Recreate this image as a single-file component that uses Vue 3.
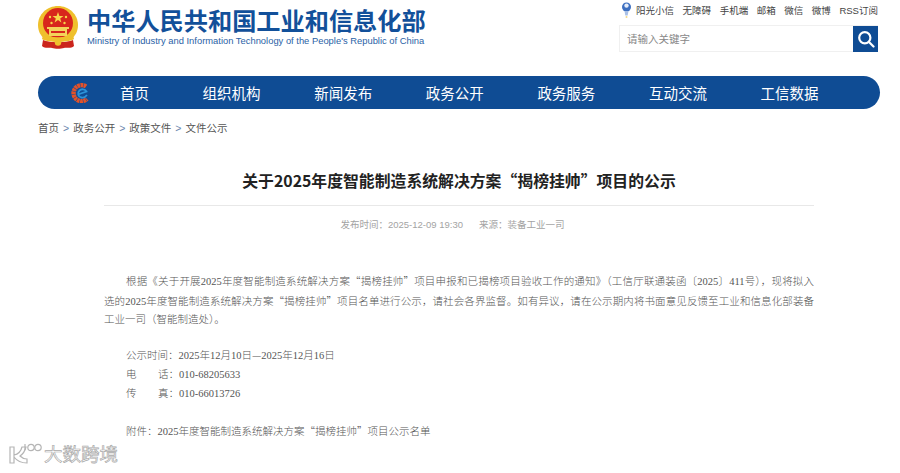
<template>
  <div class="page">
    <!-- 顶部 -->
    <header class="top">
      <div class="brand">
        <svg class="emblem" width="40" height="43" viewBox="0 0 40 43">
          <path d="M20 0C9 0 0 8.500 0 19c0 6 2.500 11 7 14h26c4.500-3 7-8 7-14C40 8.500 31 0 20 0z" fill="#efc02c" />
          <circle cx="20" cy="17" r="15" fill="#d8261c" />
          <polygon points="20,6 21.400,10 25.500,10 22.200,12.400 23.400,16.400 20,14 16.600,16.400 17.800,12.400 14.500,10 18.600,10" fill="#f7d64a" />
          <circle cx="12" cy="11" r="1.200" fill="#f7d64a" />
          <circle cx="28" cy="11" r="1.200" fill="#f7d64a" />
          <circle cx="13.500" cy="17" r="1.200" fill="#f7d64a" />
          <circle cx="26.500" cy="17" r="1.200" fill="#f7d64a" />
          <path d="M9 21h22v2h-2v7H11v-7H9z" fill="#f4d35a" />
          <path d="M13 25h14v2H13z" fill="#d8261c" />
          <path d="M5 29c5 3 25 3 30 0l1 4c-5 4-27 4-32 0z" fill="#efc02c" />
          <path d="M5 34c6 3 24 3 30 0l1 6c-3 3-8 1-10 2-3 1-9 1-12 0-2-1-7 1-10-2z" fill="#cb251c" />
          <circle cx="20" cy="36.500" r="3.200" fill="#efc02c" />
        </svg>
        <div class="brand-text">
          <div class="brand-cn">中华人民共和国工业和信息化部</div>
          <div class="brand-en">Ministry of Industry and Information Technology of the People's Republic of China</div>
        </div>
      </div>
      <div class="tools">
        <ul class="links">
          <li v-for="(item, i) in links" :key="item" class="link">
            <svg v-if="i === 0" width="11" height="16" viewBox="0 0 11 16">
              <circle cx="5.500" cy="5" r="4.500" fill="#3d6fc0" />
              <circle cx="5.500" cy="3.600" r="2.200" fill="#e6edf9" />
              <path d="M3.500 9h4l-.8 4.500H4.300z" fill="#a9c0e6" />
              <circle cx="5.500" cy="15" r="1" fill="#f3d98a" />
            </svg>
            {{ item }}
          </li>
        </ul>
        <div class="search">
          <span class="placeholder">请输入关键字</span>
          <button class="search-btn" type="button" aria-label="搜索">
            <svg width="18" height="18" viewBox="0 0 18 18" fill="none" stroke="#fff" stroke-width="2.200">
              <circle cx="7.800" cy="7.800" r="5.600" />
              <path d="M12 12l4.500 4.500" stroke-linecap="round" />
            </svg>
          </button>
        </div>
      </div>
    </header>

    <!-- 导航 -->
    <nav class="nav">
      <svg class="nav-logo" width="20" height="20" viewBox="0 0 20 20" fill="none">
        <path d="M15 3.500A8 8 0 1 0 16 16" stroke="#e2522a" stroke-width="4.400" stroke-dasharray="2.600 .5" />
        <path d="M7 11.500l8.500-3c-1.500-2.500-5-3-7-1-2.500 2.500-1.500 6.500 2 7 2 .3 4-.5 5.500-2.500" stroke="#2b93d9" stroke-width="1.800" />
      </svg>
      <a v-for="item in navItems" :key="item" class="nav-item">{{ item }}</a>
    </nav>

    <div class="crumbs">
      <template v-for="(c, i) in crumbs" :key="c">
        <span v-if="i" class="sep">&gt;</span>
        <span>{{ c }}</span>
      </template>
    </div>

    <!-- 正文 -->
    <main class="article">
      <h1 class="title">关于2025年度智能制造系统解决方案“揭榜挂帅”项目的公示</h1>
      <div class="meta">
        <span>发布时间：2025-12-09 19:30</span>
        <span>来源：装备工业一司</span>
      </div>
      <div class="body">
        <div class="para">
          <p class="line first">根据《关于开展2025年度智能制造系统解决方案<span class="q">“</span>揭榜挂帅<span class="q">”</span>项目申报和已揭榜项目验收工作的通知》（工信厅联通装函〔2025〕411号），现将拟入</p>
          <p class="line">选的2025年度智能制造系统解决方案<span class="q">“</span>揭榜挂帅<span class="q">”</span>项目名单进行公示，请社会各界监督。如有异议，请在公示期内将书面意见反馈至工业和信息化部装备</p>
          <p class="line last">工业一司（智能制造处）。</p>
        </div>
        <div class="info">
          <p>公示时间：2025年12月10日<span class="q">—</span>2025年12月16日</p>
          <p><span class="gap">电</span>话：010-68205633</p>
          <p><span class="gap">传</span>真：010-66013726</p>
        </div>
        <p class="attach">附件：2025年度智能制造系统解决方案<span class="q">“</span>揭榜挂帅<span class="q">”</span>项目公示名单</p>
      </div>
    </main>

    <!-- 水印 -->
    <div class="watermark">
      <svg width="36" height="24" viewBox="0 0 36 24" fill="none" stroke="#b5b5b5" stroke-width="1.200">
        <path d="M2 4h4v16H2zM6 12c5-1 7-4 8-8h4c-1 4-3 7-6 9 2 2 4 3 7 3v4c-5 0-10-2-13-6z" fill="#fff" />
        <path d="M17 7V1" />
        <circle cx="23" cy="4.500" r="3.200" />
        <circle cx="30" cy="4.500" r="3.200" />
      </svg>
      <span>大数跨境</span>
    </div>
  </div>
</template>

<script setup>
const links = ['阳光小信', '无障碍', '手机端', '邮箱', '微信', '微博', 'RSS订阅']
const navItems = ['首页', '组织机构', '新闻发布', '政务公开', '政务服务', '互动交流', '工信数据']
const crumbs = ['首页', '政务公开', '政策文件', '文件公示']
</script>

<style>
html, body {
  background: #fff;
}
</style>

<style scoped>
.page {
  position: relative;
  width: 900px;
  height: 473px;
  overflow: hidden;
  background: #fff;
  font-family: "Liberation Sans", "Noto Sans CJK SC", sans-serif;
  color: #333;
}

.top {
  display: flex;
  justify-content: space-between;
  padding: 0 22px 0 38px;
  height: 76px;
}

.brand {
  display: flex;
  align-items: flex-start;
  padding-top: 6px;
  gap: 9px;
}

.brand-text {
  padding-top: 2px;
}

.brand-cn {
  font-size: 24.200px;
  line-height: 27px;
  font-weight: 700;
  color: #12509a;
  white-space: nowrap;
}

.brand-en {
  font-size: 9.400px;
  line-height: 12px;
  color: #2a62a6;
  white-space: nowrap;
}

.tools {
  width: 259px;
  display: flex;
  flex-direction: column;
}

.links {
  list-style: none;
  margin: 0;
  padding: 0 0 0 2px;
  height: 19px;
  display: flex;
  justify-content: space-between;
  align-items: center;
  font-size: 9.500px;
  color: #444;
}

.link {
  display: flex;
  align-items: center;
  gap: 4px;
  white-space: nowrap;
}

.search {
  display: flex;
  justify-content: space-between;
  align-items: center;
  margin-top: 6px;
  height: 27px;
  border: 1px solid #f0f0f0;
  border-right: none;
  box-sizing: border-box;
}

.placeholder {
  padding-left: 7px;
  font-size: 10.500px;
  color: #888;
}

.search-btn {
  width: 25px;
  height: 26px;
  padding: 0;
  border: none;
  background: #0f4c94;
  display: flex;
  align-items: center;
  justify-content: center;
}

.nav {
  margin: 0 20px 0 38px;
  height: 33px;
  border-radius: 17px;
  background: #0f4c94;
  display: flex;
  align-items: center;
  padding-left: 33px;
  gap: 53.600px;
}

.nav-logo {
  margin-right: -24.600px;
}

.nav-item {
  font-size: 14.500px;
  color: #fff;
  white-space: nowrap;
}

.crumbs {
  margin: 11px 0 0 38px;
  display: flex;
  gap: 4px;
  font-size: 10.500px;
  line-height: 16px;
  color: #555;
}

.sep {
  color: #6b86ad;
}

.article {
  width: 710px;
  margin: 0 0 0 104px;
}

.title {
  margin: 33px 0 0;
  padding-bottom: 12px;
  border-bottom: 1px solid #e8e8e8;
  font-family: "Noto Sans CJK SC", sans-serif;
  font-size: 15.850px;
  line-height: 24px;
  font-weight: 700;
  color: #222;
  text-align: center;
}

.meta {
  display: flex;
  justify-content: center;
  gap: 16px;
  margin-top: 12px;
  padding-right: 13px;
  font-size: 9.500px;
  line-height: 14px;
  color: #a3a3a3;
}

.body {
  margin-top: 40px;
  font-family: "Liberation Serif", "Noto Sans CJK SC", serif;
  font-size: 10.500px;
  line-height: 18.500px;
  font-weight: 300;
  color: #555;
}

.q {
  font-family: "Noto Sans CJK SC", sans-serif;
}

.line {
  margin: 0;
  text-align: justify;
  text-align-last: justify;
}

.first {
  padding-left: 22px;
}

.last {
  text-align-last: left;
}

.info {
  margin-top: 15px;
  padding-left: 22px;
  line-height: 19px;
}

.info p {
  margin: 0;
}

.gap {
  display: inline-block;
  width: 32px;
}

.attach {
  margin: 19px 0 0;
  padding-left: 22px;
}

.watermark {
  position: absolute;
  left: 8px;
  bottom: 6px;
  display: flex;
  align-items: center;
  font-size: 18.500px;
  line-height: 24px;
  color: #fff;
  -webkit-text-stroke: 0.700px #a9a9a9;
}
</style>
